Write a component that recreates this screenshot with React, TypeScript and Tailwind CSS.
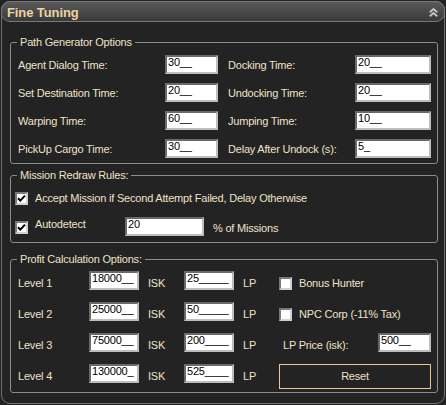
import React from "react";

const inputCls =
  "h-[19px] bg-white border-2 border-t-[#6a6a6a] border-l-[#6a6a6a] border-b-[#bdbdbd] border-r-[#bdbdbd] text-black leading-[11px] pl-[1px] overflow-hidden whitespace-nowrap";

function Field({ value, w }: { value: string; w: string }) {
  return <div className={`${inputCls} ${w}`}>{value}</div>;
}

function Check({ checked }: { checked?: boolean }) {
  return (
    <div className="w-[13px] h-[13px] shrink-0 bg-white border-2 border-t-[#7a7a7a] border-l-[#7a7a7a] border-b-[#d0d0d0] border-r-[#d0d0d0] flex items-center justify-center">
      {checked && (
        <svg width="9" height="9" viewBox="0 0 9 9">
          <path d="M1 4.2 L3.3 6.6 L8 1.6" fill="none" stroke="#000" strokeWidth="2" />
        </svg>
      )}
    </div>
  );
}

function Legend({ children }: { children: React.ReactNode }) {
  return <legend className="ml-[6px] px-[3px] leading-[14px]">{children}</legend>;
}

export default function App() {
  const pathRows: [string, string, string, string][] = [
    ["Agent Dialog Time:", "30__", "Docking Time:", "20__"],
    ["Set Destination Time:", "20__", "Undocking Time:", "20__"],
    ["Warping Time:", "60__", "Jumping Time:", "10__"],
    ["PickUp Cargo Time:", "30__", "Delay After Undock (s):", "5_"],
  ];
  const levels: [string, string, string][] = [
    ["Level 1", "18000__", "25_____"],
    ["Level 2", "25000__", "50_____"],
    ["Level 3", "75000__", "200____"],
    ["Level 4", "130000_", "525____"],
  ];
  return (
    <div className="w-[446px] h-[405px] bg-[#232323] p-px font-['Liberation_Sans',Arial,sans-serif] text-[11px] tracking-[-0.2px] text-[#efe2c6]">
      <div className="w-[444px] h-[403px] rounded-[9px] border border-[#707070] bg-[#232323] flex flex-col">
        <div className="-mx-px -mt-px h-[21px] shrink-0 rounded-[9px] border border-[#787878] bg-gradient-to-b from-[#5a5a5a] to-[#3a3a3a] flex items-start justify-between pl-[5px] pr-[6px]">
          <span className="text-[13px] font-bold leading-[15px] pt-[3px] tracking-[-0.1px] text-[#edd3a0]">
            Fine Tuning
          </span>
          <svg width="9" height="9" viewBox="0 0 9 9" className="mt-[6px]">
            <path d="M0.8 4.2 L4.5 1 L8.2 4.2" fill="none" stroke="#c4c4c4" strokeWidth="1.8" />
            <path d="M0.8 8.2 L4.5 5 L8.2 8.2" fill="none" stroke="#c4c4c4" strokeWidth="1.8" />
          </svg>
        </div>

        <div className="pl-[8px] pr-[6px] flex flex-col">
          <fieldset className="mt-[13px] border border-[#8c8c8c] rounded-[3px] pb-[5px]">
            <Legend>Path Generator Options</Legend>
            <div className="mt-[6px] pl-[7px] grid grid-cols-[147px_53px_137px_76px] auto-rows-[19px] gap-y-[9px] items-start">
              {pathRows.map((r) => (
                <React.Fragment key={r[0]}>
                  <span className="pt-[4px] leading-[13px] whitespace-nowrap">{r[0]}</span>
                  <Field value={r[1]} w="w-[53px]" />
                  <span className="pl-[10px] pt-[4px] leading-[13px] whitespace-nowrap">{r[2]}</span>
                  <Field value={r[3]} w="w-[76px]" />
                </React.Fragment>
              ))}
            </div>
          </fieldset>

          <fieldset className="mt-[4px] border border-[#8c8c8c] rounded-[3px] pb-[6px]">
            <Legend>Mission Redraw Rules:</Legend>
            <div className="mt-[10px] pl-[4px] flex items-start">
              <Check checked />
              <span className="ml-[7px] leading-[13px] whitespace-nowrap">
                Accept Mission if Second Attempt Failed, Delay Otherwise
              </span>
            </div>
            <div className="mt-[12px] pl-[4px] flex items-start">
              <div className="mt-[4px]">
                <Check checked />
              </div>
              <span className="ml-[7px] mt-[1px] w-[90px] leading-[13px]">Autodetect</span>
              <Field value="20" w="w-[79px]" />
              <span className="ml-[9px] mt-[5px] leading-[13px] whitespace-nowrap">% of Missions</span>
            </div>
          </fieldset>

          <fieldset className="mt-[9px] border border-[#8c8c8c] rounded-[3px] pb-[9px]">
            <Legend>Profit Calculation Options:</Legend>
            <div className="mt-[5px] pl-[7px] grid grid-cols-[71px_50px_45px_50px_45px_152px] auto-rows-[19px] gap-y-[12px] items-start">
              {levels.map((l, i) => (
                <React.Fragment key={l[0]}>
                  <span className="pt-[6px] leading-[13px]">{l[0]}</span>
                  <Field value={l[1]} w="w-[50px]" />
                  <span className="pl-[9px] pt-[6px] leading-[13px]">ISK</span>
                  <Field value={l[2]} w="w-[50px]" />
                  <span className="pl-[9px] pt-[6px] leading-[13px]">LP</span>
                  {i === 0 && (
                    <div className="flex items-start pt-[6px]">
                      <Check />
                      <span className="ml-[7px] leading-[13px] whitespace-nowrap">Bonus Hunter</span>
                    </div>
                  )}
                  {i === 1 && (
                    <div className="flex items-start pt-[6px]">
                      <Check />
                      <span className="ml-[7px] leading-[13px] whitespace-nowrap">NPC Corp (-11% Tax)</span>
                    </div>
                  )}
                  {i === 2 && (
                    <div className="flex items-start justify-between">
                      <span className="pl-[4px] pt-[6px] leading-[13px] whitespace-nowrap">LP Price (isk):</span>
                      <Field value="500__" w="w-[53px]" />
                    </div>
                  )}
                  {i === 3 && (
                    <div className="h-[25px] border border-[#e9c990] flex items-center justify-center leading-[13px]">
                      Reset
                    </div>
                  )}
                </React.Fragment>
              ))}
            </div>
          </fieldset>
        </div>
      </div>
    </div>
  );
}
